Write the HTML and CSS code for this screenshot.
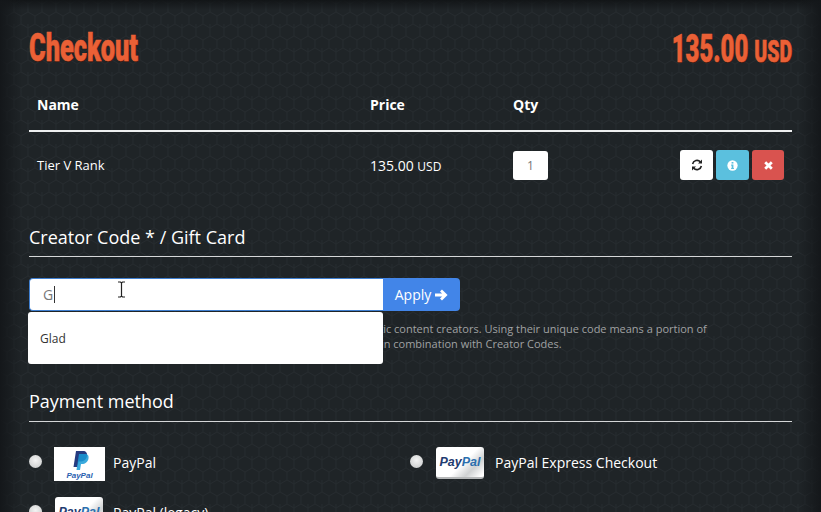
FILE: index.html
```html
<!DOCTYPE html>
<html lang="en">
<head>
<meta charset="utf-8">
<title>Checkout</title>
<link rel="stylesheet" href="styles.css">
</head>
<body>
<div class="vignette"></div>
<main class="page">
  <header class="top">
    <h1 class="display display-title">Checkout</h1>
    <div class="display display-total">135.00 <span class="cur">USD</span></div>
  </header>

  <div class="cart-row cart-head">
    <div>Name</div><div>Price</div><div>Qty</div><div></div>
  </div>
  <div class="cart-row cart-item">
    <div>Tier V Rank</div>
    <div class="price">135.00 <small>USD</small></div>
    <div><div class="qty">1</div></div>
    <div class="actions">
      <button class="btn btn-white" aria-label="Update">
        <svg viewBox="0 0 12 12" width="12" height="12"><path class="ic-stroke" d="M1.6 5A4.5 4.5 0 0 1 9.4 3"/><path class="ic-stroke" d="M10.4 7A4.5 4.5 0 0 1 2.6 9"/><path class="ic-dark" d="M11 .6V4.6H7zM1 11.4V7.4H5z"/></svg>
      </button>
      <button class="btn btn-info" aria-label="Info">
        <svg viewBox="0 0 12 12" width="11" height="11"><circle class="ic-white" cx="6" cy="6" r="5.6"/><rect class="ic-info" x="5" y="2.2" width="2" height="1.7"/><path class="ic-info" d="M4.5 5H7V8.6H7.6V9.8H4.5V8.6H5.1V6.2H4.5z"/></svg>
      </button>
      <button class="btn btn-danger" aria-label="Remove">
        <svg viewBox="0 0 12 12" width="11" height="11"><path class="ic-cross" d="M2.4 2.4L9.6 9.6M9.6 2.4L2.4 9.6"/></svg>
      </button>
    </div>
  </div>

  <section class="code-section">
    <h2 class="section-title">Creator Code * / Gift Card</h2>
    <div class="code-group">
      <div class="code-input">G<span class="caret"></span></div>
      <button class="apply">Apply <svg viewBox="0 0 14 14" width="14" height="14"><path class="ic-arrow" d="M1 7H11.5M7 2.4L11.6 7L7 11.6"/></svg></button>
      <div class="suggest">Glad</div>
      <svg class="ibeam" viewBox="0 0 9 17" width="9" height="17"><path d="M1 1H3.5L4.5 2L5.500 1H8M4.500 2V15M1 16H3.500L4.500 15L5.500 16H8" /></svg>
    </div>
    <p class="help">A Creator Code is exclusively given away to some of the most energetic content creators. Using their unique code means a portion of<br>your purchase goes directly to them too. Gift Cards can also be used in combination with Creator Codes.</p>
  </section>

  <section class="pay-section">
    <h2 class="section-title">Payment method</h2>
    <div class="pay-grid">
      <div class="pay-opt">
        <span class="radio"></span>
        <span class="logo logo-pp">
          <svg viewBox="0 0 51 34" width="51" height="34">
            <path fill="#253b80" d="M22 4H29C32 4 33.500 6 33 9C32.400 13 29.500 14.500 26 14.500H24.500L23.500 20H19.500z"/>
            <path fill="#179bd7" opacity=".85" d="M25 7H31C34 7 35 9 34.500 11.500C34 15 31 17 28 17H27L26 23H22.500z"/>
            <text class="pp-word" x="25.500" y="31">PayPal</text>
          </svg>
        </span>
        <span class="pay-label">PayPal</span>
      </div>
      <div class="pay-opt pay-opt-b">
        <span class="radio"></span>
        <span class="logo logo-card logo-express"><span class="pp-card-text"><b>Pay</b><i>Pal</i></span></span>
        <span class="pay-label">PayPal Express Checkout</span>
      </div>
      <div class="pay-opt pay-opt-c">
        <span class="radio"></span>
        <span class="logo logo-card logo-legacy"><span class="pp-card-text"><b>Pay</b><i>Pal</i></span></span>
        <span class="pay-label">PayPal (legacy)</span>
      </div>
    </div>
  </section>
</main>
</body>
</html>
```

FILE: styles.css
```css
* { box-sizing: border-box; }
html, body { height: 100%; }
body {
  margin: 0;
  height: 512px;
  overflow: hidden;
  position: relative;
  color: #fff;
  font-family: "Open Sans", sans-serif;
  font-size: 14px;
  background-color: #1f2427;
  background-image: url("data:image/svg+xml,%3Csvg xmlns='http://www.w3.org/2000/svg' width='14' height='24'%3E%3Cpath d='M7 0L14 4V12L7 16L0 12V4zM7 16V24M0 4V0M14 4V0' fill='none' stroke='%23262b2f' stroke-width='1'/%3E%3C/svg%3E");
}
.vignette {
  position: absolute;
  inset: 0;
  pointer-events: none;
  background:
    linear-gradient(to right, #14171a 0, rgba(20,23,26,0) 22px),
    linear-gradient(to left, #14171a 0, rgba(20,23,26,0) 22px),
    linear-gradient(to bottom, #121517 0, rgba(18,21,23,0) 10px);
}
.page {
  position: relative;
  padding: 0 29px;
}
.top {
  display: flex;
  justify-content: space-between;
  align-items: flex-start;
  height: 83px;
  padding-top: 26px;
}
.display {
  margin: 0;
  font-family: Roboto, "Liberation Sans", sans-serif;
  font-weight: 900;
  color: #ea6036;
  line-height: 44px;
  -webkit-text-stroke: .6px #ea6036;
  text-shadow: 1px 1px 0 #3a1a10;
  white-space: nowrap;
}
.display-title {
  font-size: 39px;
  transform: scaleX(.65);
  transform-origin: left center;
}
.display-total {
  font-size: 38px;
  margin-top: 1px;
  transform: scaleX(.63);
  transform-origin: right center;
}
.cur { font-size: 31px; }

.cart-row {
  display: grid;
  grid-template-columns: 333px 143px 1fr auto;
  padding: 0 8px;
  align-items: center;
}
.cart-head {
  height: 49px;
  font-weight: 700;
  border-bottom: 2px solid #eef0f0;
  padding-bottom: 4px;
}
.cart-item {
  height: 67px;
  padding-bottom: 1px;
  font-size: 13px;
}
.price { font-size: 14px; }
.price small { font-size: 12px; }
.qty {
  width: 35px;
  height: 29px;
  margin-top: 1px;
  background: #fff;
  border-radius: 3px;
  color: #777;
  font-size: 12px;
  display: flex;
  align-items: center;
  justify-content: center;
}
.actions { display: flex; gap: 3px; }
.btn {
  height: 30px;
  width: 33px;
  padding: 0;
  border: 0;
  border-radius: 3px;
  display: flex;
  align-items: center;
  justify-content: center;
}
.btn-white { background: #fff; }
.btn-info { background: #5bc0de; }
.btn-danger { background: #d9534f; width: 32px; }
.ic-stroke { fill: none; stroke: #222; stroke-width: 1.600; }
.ic-dark { fill: #222; }
.ic-white { fill: #fff; }
.ic-info { fill: #5bc0de; }
.ic-cross { fill: none; stroke: #fff; stroke-width: 3; }
.ic-arrow { fill: none; stroke: #fff; stroke-width: 2.800; }

.code-section { margin-top: 17px; }
.section-title {
  margin: 0;
  padding: 9px 0 7px;
  font-size: 18px;
  font-weight: 400;
  line-height: 24px;
  border-bottom: 1px solid #d5d7d8;
}
.code-group {
  position: relative;
  display: flex;
  width: 431px;
  height: 33px;
  margin-top: 21px;
}
.code-input {
  width: 354px;
  background: #fff;
  border: 1px solid #3f7fd0;
  border-right: 0;
  border-radius: 4px 0 0 4px;
  color: #777;
  font-size: 14px;
  line-height: 33px;
  padding-left: 13px;
  display: flex;
  align-items: center;
}
.caret {
  width: 1px;
  height: 17px;
  background: #333;
  margin-left: 1px;
}
.apply {
  flex: 1;
  background: #4285e8;
  color: #fff;
  border: 0;
  border-radius: 0 4px 4px 0;
  font: 14px "Open Sans", sans-serif;
  padding: 0;
  display: flex;
  align-items: center;
  justify-content: center;
  gap: 3px;
}
.suggest {
  position: absolute;
  left: -1px;
  top: 34px;
  width: 355px;
  height: 52px;
  background: #fff;
  border-radius: 3px;
  color: #333;
  font-size: 12px;
  line-height: 53px;
  padding-left: 12px;
  z-index: 2;
}
.ibeam {
  position: absolute;
  left: 88px;
  top: 3px;
  z-index: 3;
}
.ibeam path { fill: none; stroke: #222; stroke-width: 1.200; }
.help {
  margin: 10px 0 0;
  font-size: 11px;
  line-height: 15px;
  color: #a0a2a3;
  white-space: nowrap;
}

.pay-section { margin-top: 38px; }
.pay-section .section-title { padding: 0 0 8px; }
.pay-grid {
  display: grid;
  grid-template-columns: 381px 1fr;
  margin-top: 25px;
}
.pay-opt {
  display: flex;
  align-items: center;
  height: 34px;
  position: relative;
}
.radio {
  width: 13px;
  height: 13px;
  margin-bottom: 6px;
  border-radius: 50%;
  background: radial-gradient(circle at 50% 40%, #f4f4f4, #c4c6c6);
  flex: none;
}
.logo { flex: none; display: block; overflow: hidden; }
.logo-pp {
  width: 51px;
  height: 34px;
  background: #fff;
  margin-left: 12px;
}
.logo-pp svg { display: block; }
.pp-word {
  font: italic 700 8px "Liberation Sans", sans-serif;
  fill: #2a5fb0;
  text-anchor: middle;
}
.pay-label { margin-left: 8px; font-size: 14px; margin-bottom: 4px; }
.logo-card {
  width: 48px;
  height: 32px;
  align-self: flex-start;
  border-radius: 3px;
  background: linear-gradient(135deg, #fff 55%, #cfd1d2 75%, #fff 95%);
  border-bottom: 2px solid #b5b7b8;
  display: flex;
  align-items: center;
  justify-content: center;
}
.pp-card-text {
  font: italic 700 12.500px "Liberation Sans", sans-serif;
  color: #1f3b70;
}
.pp-card-text b { font-weight: 700; }
.pp-card-text i { color: #2b6fae; font-weight: 700; }
.logo-express { margin-left: 13px; }
.logo-express + .pay-label { margin-left: 11px; }
.pay-opt-c { margin-top: 16px; }
.logo-legacy { margin-left: 13px; }
.logo-legacy + .pay-label { margin-left: 10px; }
```
